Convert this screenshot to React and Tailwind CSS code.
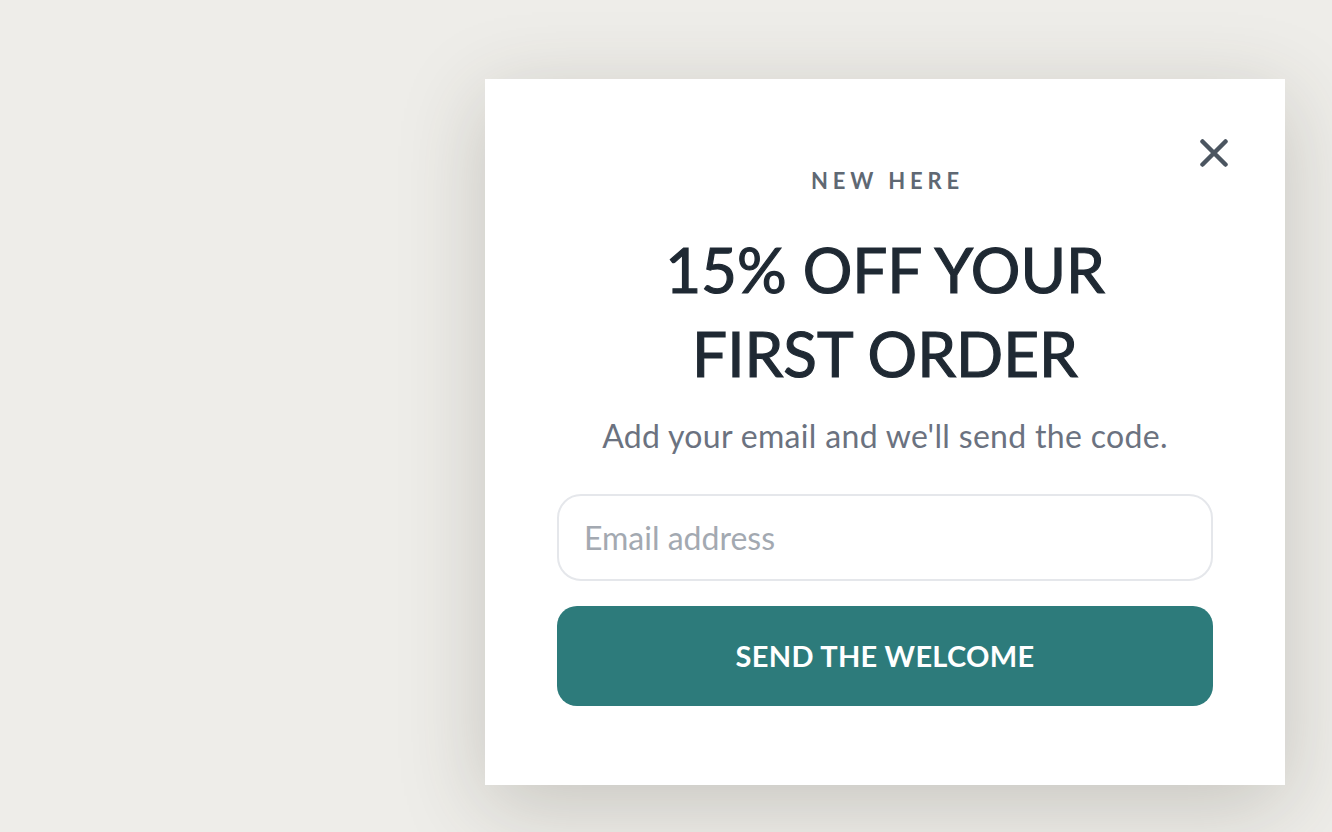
import React from "react";

const CloseIcon = () => (
  <svg width="28" height="28" viewBox="0 0 28 28" fill="none">
    <path
      d="M2.5 2.5L25.5 25.5M25.5 2.5L2.5 25.5"
      stroke="#4b5560"
      strokeWidth="4.5"
      strokeLinecap="round"
    />
  </svg>
);

export default function App() {
  return (
    <div
      className="h-screen w-full bg-[#eeede9] flex justify-end items-end p-[47px]"
      style={{ fontFamily: "Lato, 'Noto Sans', sans-serif" }}
    >
      <div className="relative w-[800px] h-[706px] bg-white shadow-[0_20px_80px_rgba(60,55,40,0.22)] flex flex-col items-center pt-[87px] px-[72px]">
        <button
          className="absolute top-[60px] right-[57px] p-0 leading-none"
          aria-label="Close"
        >
          <CloseIcon />
        </button>

        <p className="text-[22px] leading-[30px] font-bold tracking-[0.22em] text-[#5f6873] pl-[0.22em]">
          NEW HERE
        </p>

        <h2 className="mt-[31px] text-[62px] leading-[84px] font-normal [-webkit-text-stroke:1.2px_#1f2933] text-[#1f2933] text-center">
          15% OFF YOUR
          <br />
          FIRST ORDER
        </h2>

        <p className="mt-[21px] text-[32px] leading-[40px] text-[#6b7280] tracking-[0.01em]">
          Add your email and we'll send the code.
        </p>

        <input
          type="email"
          placeholder="Email address"
          className="mt-[38px] w-full h-[87px] rounded-[24px] border-2 border-[#e5e7eb] px-[25px] text-[32px] text-[#1f2933] placeholder:text-[#a3a9b1] outline-none"
        />

        <button className="mt-[25px] w-full h-[100px] rounded-[20px] bg-[#2d7b7b] text-white text-[29px] font-bold tracking-[0.01em]">
          SEND THE WELCOME
        </button>
      </div>
    </div>
  );
}
